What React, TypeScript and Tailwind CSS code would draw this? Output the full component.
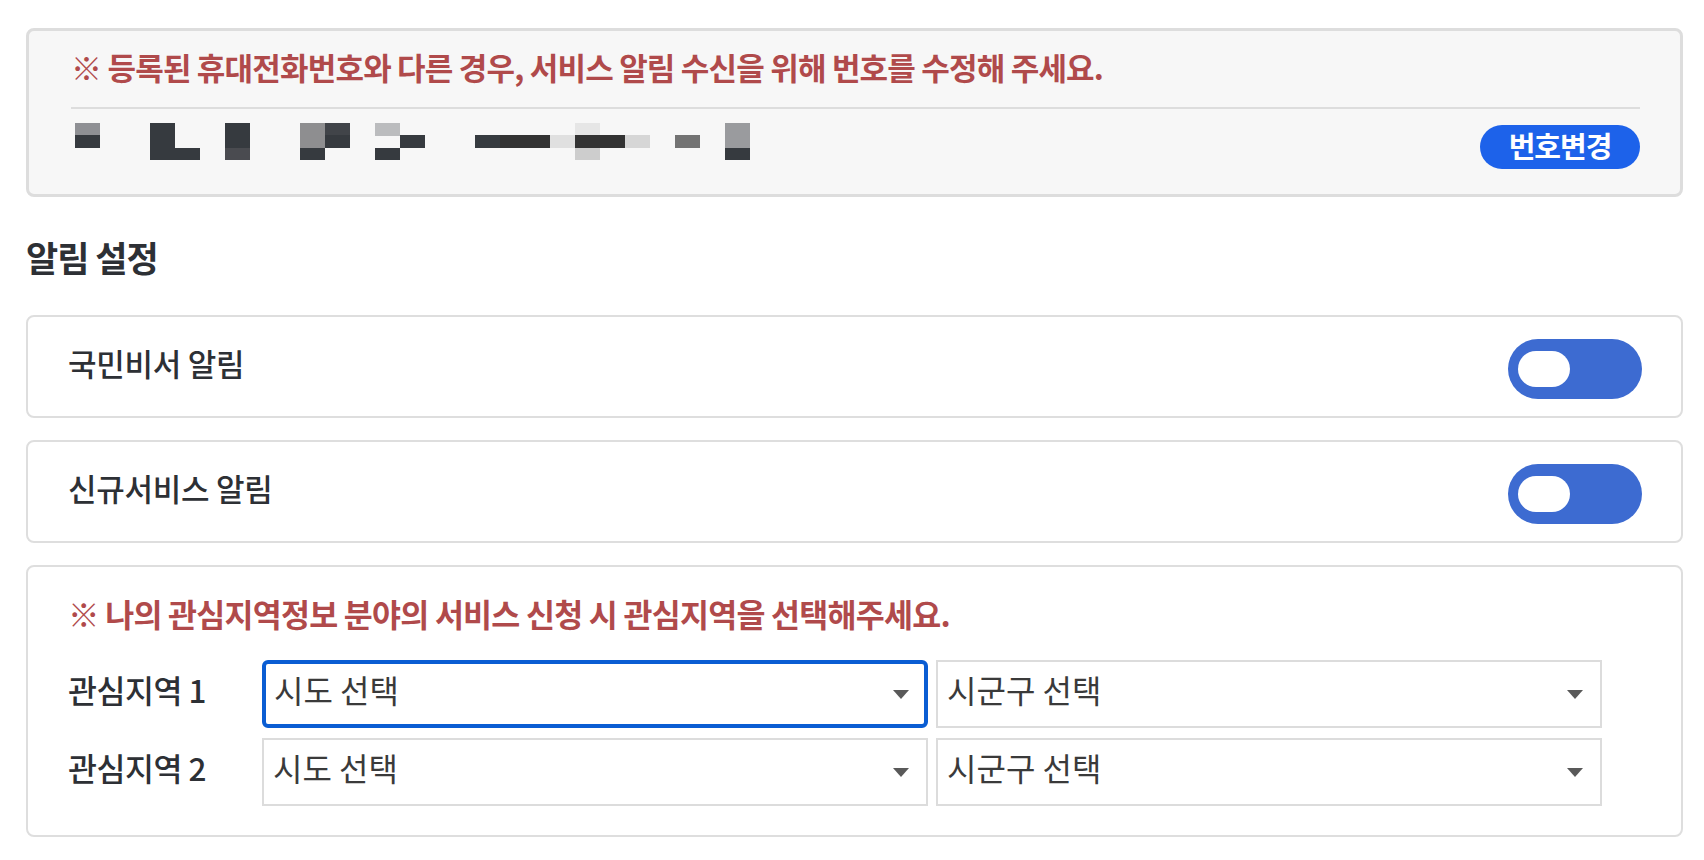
import React from "react";

const cells: [number, number, string][] = [
  [0, 0, "#8f9094"], [0, 1, "#363a3f"],
  [3, 0, "#363a3f"], [3, 1, "#363a3f"], [3, 2, "#363a3f"], [4, 2, "#363a3f"],
  [6, 0, "#363a3f"], [6, 1, "#363a3f"], [6, 2, "#4a4b50"],
  [9, 0, "#8e8e90"], [9, 1, "#8e8e90"], [9, 2, "#363a3f"],
  [10, 0, "#414449"], [10, 1, "#363a3f"],
  [12, 0, "#bbbcbe"], [12, 2, "#363a3f"], [13, 1, "#363a3f"],
  [16, 1, "#363b40"], [17, 1, "#333333"], [18, 1, "#333333"], [19, 1, "#e0e0e0"],
  [20, 0, "#e6e6e6"], [20, 1, "#333333"], [20, 2, "#cdcdcd"], [21, 1, "#333333"], [22, 1, "#d6d6d6"],
  [24, 1, "#737373"],
  [26, 0, "#9a9b9e"], [26, 1, "#9a9b9e"], [26, 2, "#363a3f"],
];

function Mosaic() {
  const h = 37 / 3;
  return (
    <svg width="675" height="37" viewBox="0 0 675 37" shapeRendering="crispEdges">
      {cells.map(([c, r, col], i) => (
        <rect key={i} x={c * 25} y={r * h} width={25} height={h + 0.2} fill={col} />
      ))}
    </svg>
  );
}

function Toggle() {
  return (
    <div className="w-[134px] h-[60px] rounded-full bg-[#3d6bd1] flex items-center pl-[10px]">
      <div className="w-[52px] h-[36px] rounded-full bg-white" />
    </div>
  );
}

function Caret() {
  return (
    <svg width="16" height="9" viewBox="0 0 16 9">
      <path d="M0 0 L16 0 L8 9 Z" fill="#595959" />
    </svg>
  );
}

function Select({ label, focused }: { label: string; focused?: boolean }) {
  return (
    <div
      className={
        focused
          ? "w-[666px] h-[68px] border-[4px] border-[#0a5dd3] rounded-[6px] bg-white flex items-center justify-between pl-[8px] pr-[15px]"
          : "w-[666px] h-[68px] border-2 border-[#dcdcdc] bg-white flex items-center justify-between pl-[9px] pr-[17px]"
      }
    >
      <span className="mb-[10px] text-[32px] leading-[40px] text-[#3a3a3a]">{label}</span>
      <Caret />
    </div>
  );
}

function ToggleCard({ label }: { label: string }) {
  return (
    <div className="h-[103px] border-2 border-[#dedede] rounded-[8px] bg-white flex items-center justify-between pl-[40px] pr-[39px]">
      <span className="mb-[8px] text-[31px] leading-[40px] font-medium text-[#2d3035] tracking-[-0.25px]">{label}</span>
      <div className="mt-[4px]">
        <Toggle />
      </div>
    </div>
  );
}

export default function App() {
  return (
    <div className="min-h-screen bg-white font-['Noto_Sans_CJK_KR','Noto_Sans',sans-serif] pl-[26px] pr-[21px] pt-[28px] pb-[20px]">
      <div className="h-[169px] border-[3px] border-[#dddddd] rounded-[8px] bg-[#f7f7f7] pl-[42px] pr-[40px] pt-[16px]">
        <p className="text-[31px] leading-[40px] font-bold text-[#b04a4b] tracking-[-0.8px]">
          ※ 등록된 휴대전화번호와 다른 경우, 서비스 알림 수신을 위해 번호를 수정해 주세요.
        </p>
        <div className="mt-[20px] h-[2px] bg-[#dddddd]" />
        <div className="mt-[14px] flex items-start justify-between">
          <div className="ml-[4px]">
            <Mosaic />
          </div>
          <button className="mt-[2px] w-[160px] h-[44px] rounded-full bg-[#1d62ea] text-white text-[29px] leading-[44px] font-bold tracking-[-1px] flex items-center justify-center">
            <span className="mb-[4px]">번호변경</span>
          </button>
        </div>
      </div>

      <h2 className="mt-[38px] text-[35px] leading-[44px] font-semibold text-[#2d3035] tracking-[-1px]">알림 설정</h2>

      <div className="mt-[36px] flex flex-col gap-[22px]">
        <ToggleCard label="국민비서 알림" />
        <ToggleCard label="신규서비스 알림" />

        <div className="border-2 border-[#dedede] rounded-[8px] bg-white pl-[40px] pt-[26px] pb-[29px]">
          <p className="text-[31.5px] leading-[40px] font-bold text-[#b04a4b] tracking-[-0.75px]">
            ※ 나의 관심지역정보 분야의 서비스 신청 시 관심지역을 선택해주세요.
          </p>
          <div className="mt-[27px] flex flex-col gap-[10px]">
            <div className="flex items-center">
              <span className="mb-[10px] w-[194px] text-[31.5px] leading-[40px] font-medium text-[#2d3035] tracking-[-0.5px]">관심지역 1</span>
              <div className="flex gap-[8px]">
                <Select label="시도 선택" focused />
                <Select label="시군구 선택" />
              </div>
            </div>
            <div className="flex items-center">
              <span className="mb-[10px] w-[194px] text-[31.5px] leading-[40px] font-medium text-[#2d3035] tracking-[-0.5px]">관심지역 2</span>
              <div className="flex gap-[8px]">
                <Select label="시도 선택" />
                <Select label="시군구 선택" />
              </div>
            </div>
          </div>
        </div>
      </div>
    </div>
  );
}
